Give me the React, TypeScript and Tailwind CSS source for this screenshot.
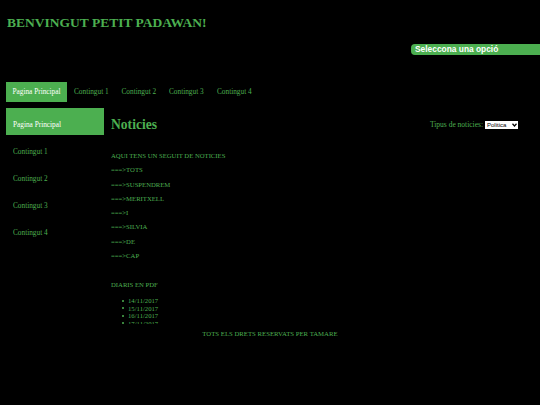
import React from "react";

const sideItems = ["Contingut 1", "Contingut 2", "Contingut 3", "Contingut 4"];
const lines = ["TOTS", "SUSPENDREM", "MERITXELL", "I", "SILVIA", "DE", "CAP"];
const dates = ["14/11/2017", "15/11/2017", "16/11/2017", "17/11/2017"];

function App() {
  return (
    <div className="h-[405px] w-[540px] overflow-hidden bg-black font-['Liberation_Serif',serif] text-[#4caf50]">
      <header className="h-[82px] pl-[7px]">
        <h1 className="pt-[14px] text-[13.5px] leading-[17px] font-bold">BENVINGUT PETIT PADAWAN!</h1>
        <div className="mt-[13px] ml-auto h-[11px] w-[129px] rounded-l-[4px] bg-[#4caf50] pl-[4px] font-['Liberation_Sans',sans-serif] text-[8.4px] leading-[11px] font-bold text-white">
          Seleccona una opció
        </div>
      </header>

      <nav className="ml-[6px] flex h-[20px] text-[7.3px] leading-[20px]">
        <a className="w-[61px] bg-[#4caf50] text-center whitespace-nowrap text-white">Pagina Principal</a>
        <a className="ml-[7px] w-[34px] whitespace-nowrap">Contingut 1</a>
        <a className="ml-[13.5px] w-[34px] whitespace-nowrap">Contingut 2</a>
        <a className="ml-[13.5px] w-[34px] whitespace-nowrap">Contingut 3</a>
        <a className="ml-[14px] w-[34px] whitespace-nowrap">Contingut 4</a>
      </nav>

      <div className="mt-[6px] flex h-[218px]">
        <aside className="ml-[6px] w-[98px] shrink-0 text-[7.3px]">
          <div className="flex h-[27px] items-end bg-[#4caf50] pb-[6px] pl-[7px] leading-[9px] text-white">Pagina Principal</div>
          <div className="flex flex-col gap-[18px] pt-[12px] pl-[7px]">
            {sideItems.map((item) => (
              <a key={item} className="leading-[9px]">{item}</a>
            ))}
          </div>
        </aside>

        <main className="ml-[7px] flex-1 overflow-hidden text-[6.7px] leading-[8px]">
          <div className="flex h-[27px] items-center justify-between pt-[6px] pr-[22px]">
            <h2 className="text-[13.6px] leading-[15px] font-bold">Noticies</h2>
            <div className="flex items-center gap-[2px] text-[7.5px]">
              <span>Tipus de noticies:</span>
              <div className="relative h-[8px] w-[33px]">
                <select className="block h-[8px] w-[33px] appearance-none bg-white pl-[2px] font-['Liberation_Sans',sans-serif] text-[6px] leading-[8px] text-black">
                  <option>Politica</option>
                </select>
                <svg className="absolute top-[2px] right-[1px] h-[4px] w-[5px]" viewBox="0 0 10 8" fill="none" stroke="#000" strokeWidth="2.4">
                  <path d="M1 1.5 5 6 9 1.5" />
                </svg>
              </div>
            </div>
          </div>
          <p className="mt-[17px]">AQUI TENS UN SEGUIT DE NOTICIES</p>
          <div className="mt-[6.3px] flex flex-col gap-[6.3px]">
            {lines.map((line) => (
              <p key={line}>{"===>"}{line}</p>
            ))}
          </div>
          <p className="mt-[21px]">DIARIS EN PDF</p>
          <ul className="mt-[8px] h-[27px] overflow-hidden pl-[11px] leading-[7.5px]">
            {dates.map((date) => (
              <li key={date} className="flex items-center gap-[4px]">
                <span className="h-[2px] w-[2px] rounded-full bg-[#4caf50]" />
                {date}
              </li>
            ))}
          </ul>
        </main>
      </div>

      <footer className="mt-[4px] text-center text-[6.75px] leading-[8px]">TOTS ELS DRETS RESERVATS PER TAMARE</footer>
    </div>
  );
}

export default App;
